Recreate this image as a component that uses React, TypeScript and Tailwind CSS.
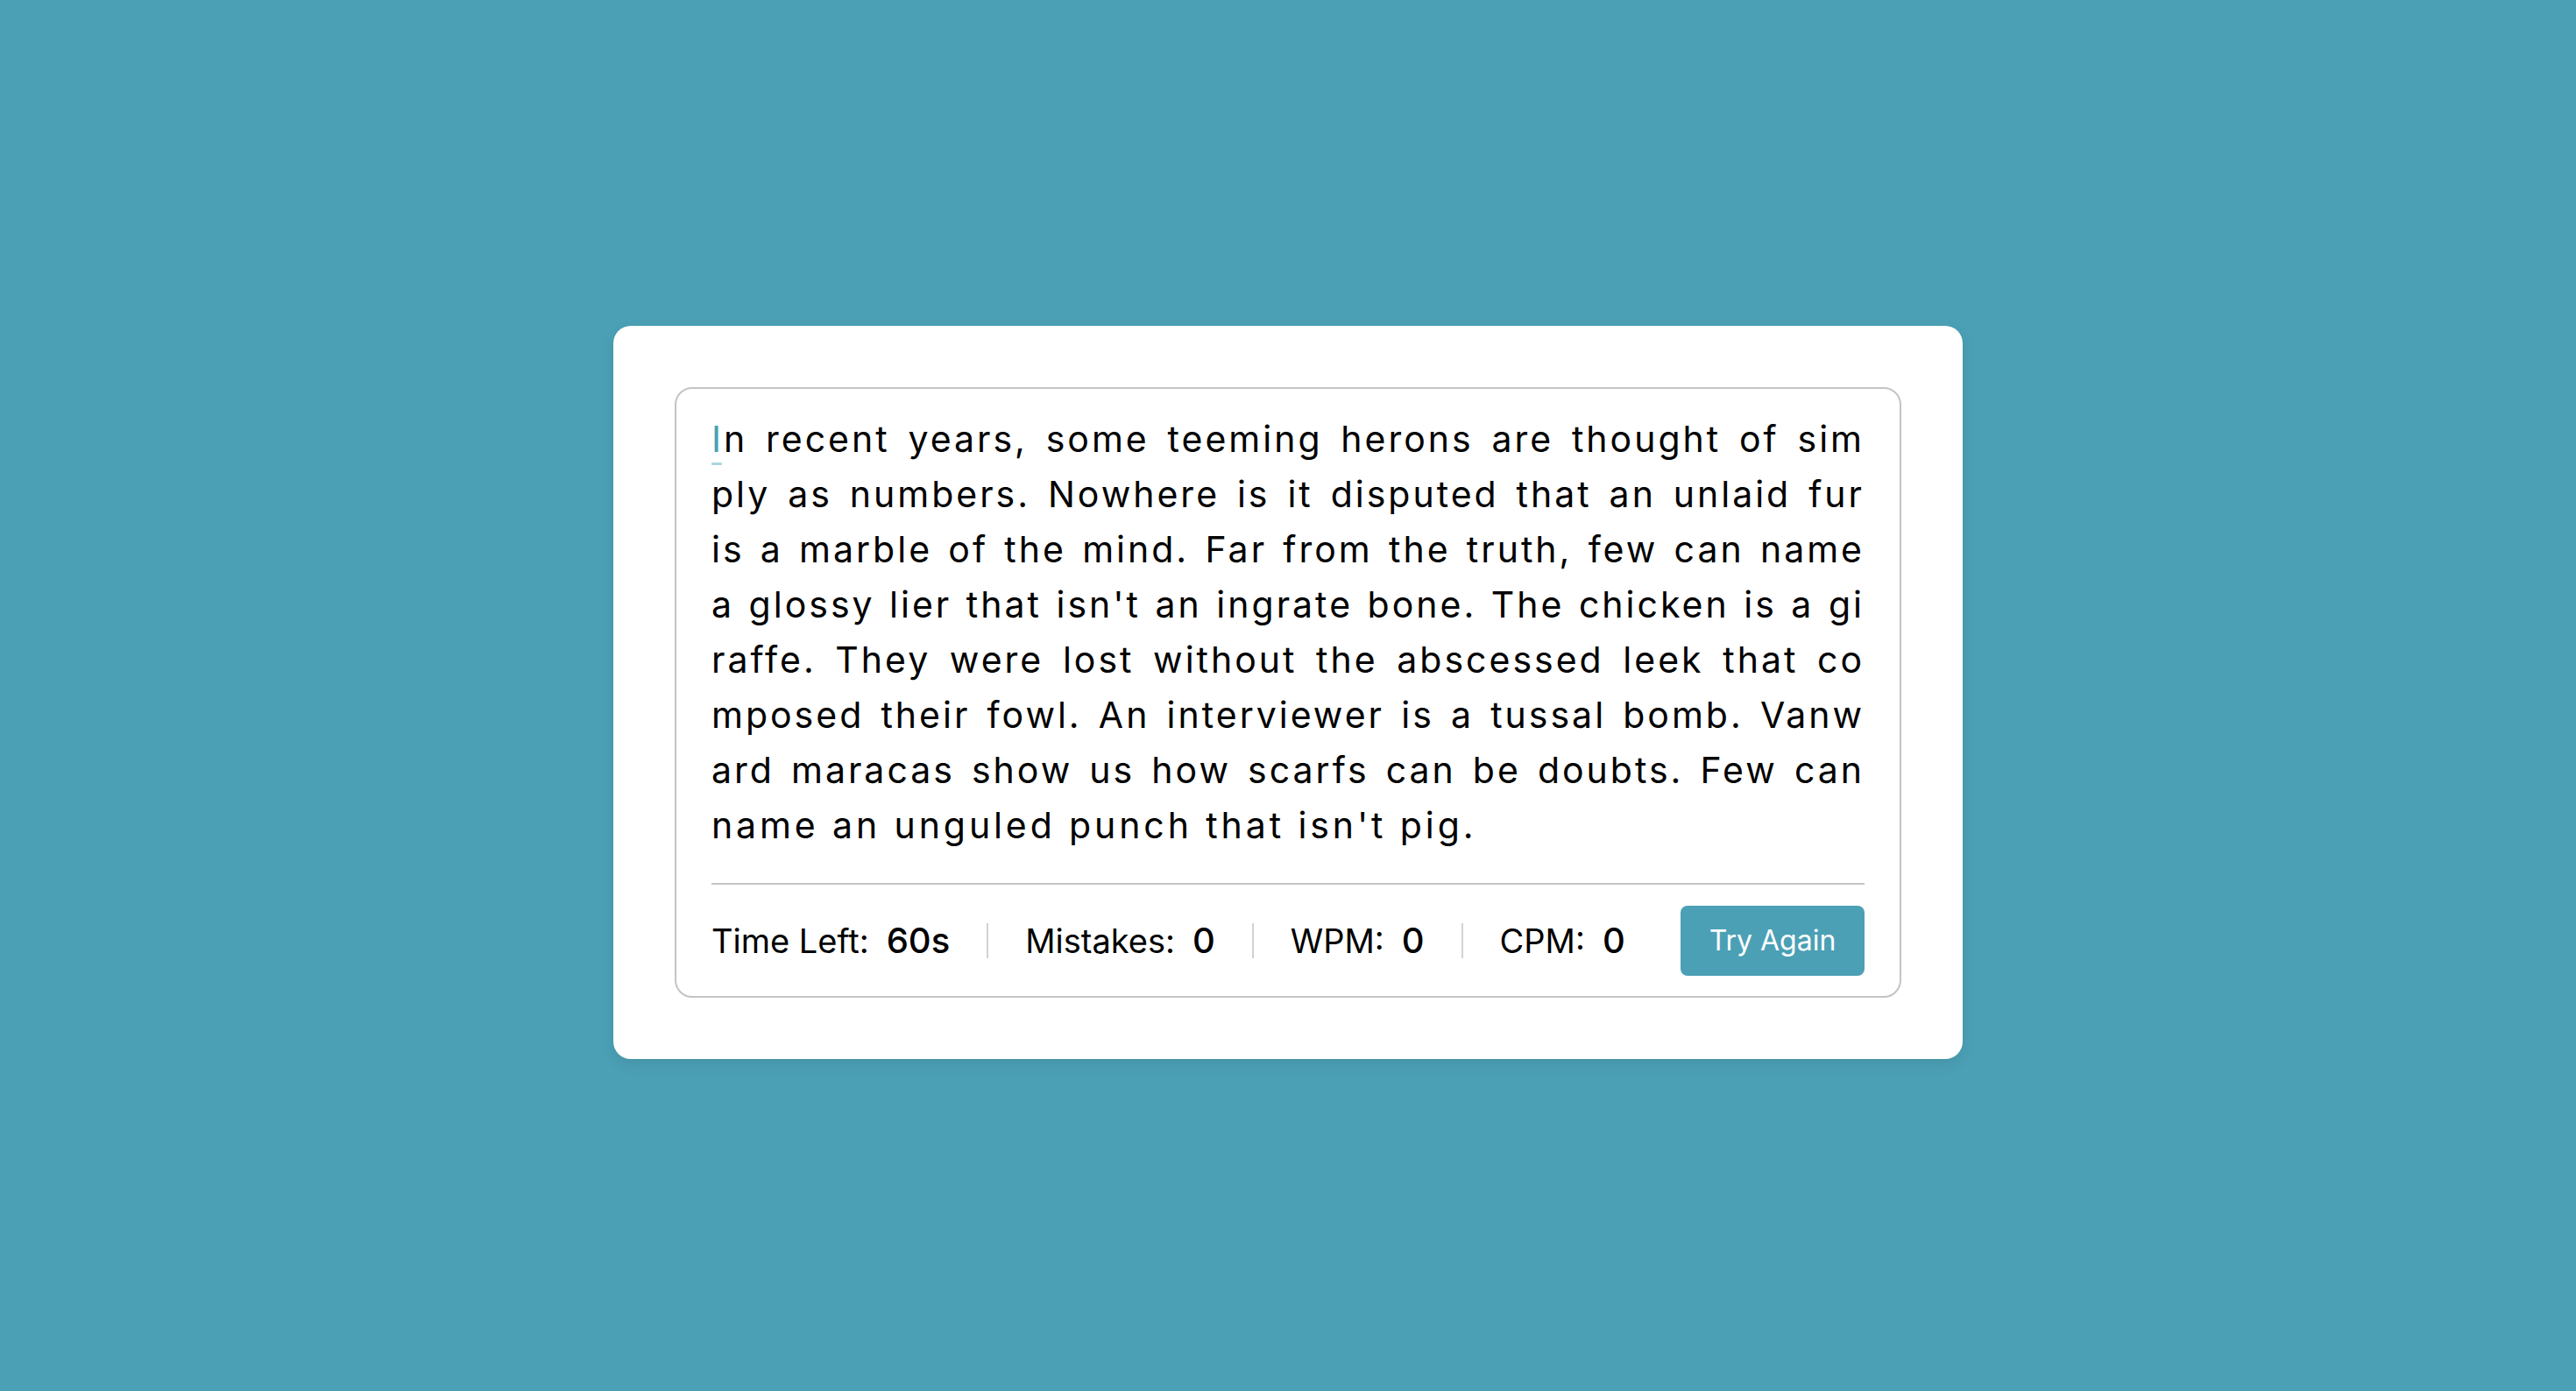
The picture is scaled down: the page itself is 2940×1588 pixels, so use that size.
import React from "react";

const LINES = [
  "n recent years, some teeming herons are thought of sim",
  "ply as numbers. Nowhere is it disputed that an unlaid fur",
  "is a marble of the mind. Far from the truth, few can name",
  "a glossy lier that isn't an ingrate bone. The chicken is a gi",
  "raffe. They were lost without the abscessed leek that co",
  "mposed their fowl. An interviewer is a tussal bomb. Vanw",
  "ard maracas show us how scarfs can be doubts. Few can",
  "name an unguled punch that isn't pig.",
];

function Stat({ label, value }: { label: string; value: string }) {
  return (
    <div className="flex items-baseline">
      <span className="text-[38px]">{label}</span>
      <span className="ml-[20px] text-[40px] font-medium">{value}</span>
    </div>
  );
}

function Sep() {
  return <div className="mx-[42px] h-[40px] w-[2px] bg-[#d2d2d2]" />;
}

export default function App() {
  return (
    <div className="flex min-h-screen w-full items-center justify-center bg-[#4ba0b5] pb-[7px] font-['Inter',sans-serif]">
      <div className="w-[1540px] rounded-[20px] bg-white p-[70px] shadow-[0_6px_16px_rgba(0,0,0,0.08)]">
        <div className="rounded-[20px] border-2 border-[#c4c4c4] px-[40px] pb-[23px] pt-[26px] text-black">
          <div className="text-[41px] leading-[63px] tracking-[3px]">
            {LINES.map((line, i) => (
              <div
                key={i}
                className={
                  i < LINES.length - 1
                    ? "whitespace-nowrap text-justify [text-align-last:justify]"
                    : "whitespace-nowrap text-left tracking-[3.9px]"
                }
              >
                {i === 0 && (
                  <span className="relative text-[#4ba0b5]">
                    I
                    <span className="absolute left-0 top-[52px] h-[3px] w-[12px] rounded-[1px] bg-[#a9d6df]" />
                  </span>
                )}
                {line}
              </div>
            ))}
          </div>
          <div className="mt-[34px] h-[2px] w-full bg-[#c4c4c4]" />
          <div className="mt-[24px] flex h-[80px] items-center justify-between">
            <div className="flex items-center">
              <Stat label="Time Left:" value="60s" />
              <Sep />
              <Stat label="Mistakes:" value="0" />
              <Sep />
              <Stat label="WPM:" value="0" />
              <Sep />
              <Stat label="CPM:" value="0" />
            </div>
            <button className="h-[80px] w-[210px] rounded-[8px] bg-[#4ba0b5] text-[32px] text-white">
              Try Again
            </button>
          </div>
        </div>
      </div>
    </div>
  );
}
